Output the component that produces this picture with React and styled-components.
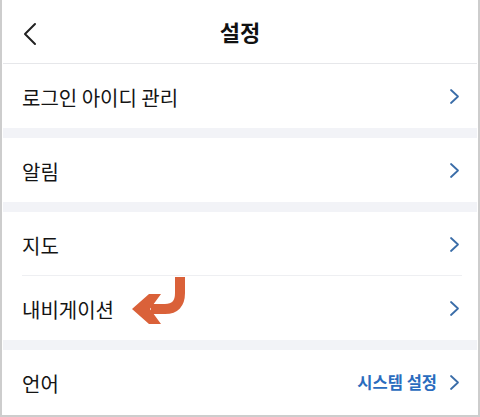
import React from "react";
import styled, { createGlobalStyle } from "styled-components";

const GlobalStyle = createGlobalStyle`
  body {
    margin: 0;
    background: #fff;
    font-family: "Noto Sans CJK KR", "Noto Sans", sans-serif;
  }
`;

const Screen = styled.div`
  width: 480px;
  height: 417px;
  box-sizing: border-box;
  border-left: 2px solid #cdcdcd;
  border-right: 2px solid #cdcdcd;
  border-bottom: 2px solid #cdcdcd;
  padding: 0 1px;
  background: #fff;
  overflow: hidden;
`;

const Header = styled.header`
  position: relative;
  height: 63px;
  display: flex;
  align-items: center;
  justify-content: center;
  border-bottom: 1px solid #e6e7ea;
`;

const BackButton = styled.button`
  position: absolute;
  left: 17px;
  top: 22px;
  padding: 0;
  border: none;
  background: none;
  display: flex;
`;

const Title = styled.h1`
  margin: 0;
  margin-top: -2px;
  font-size: 22px;
  font-weight: 700;
  color: #111;
`;

const Group = styled.section`
  background: #fff;
`;

const Gap = styled.div`
  height: 10px;
  background: #f2f3f7;
`;

const Row = styled.div`
  position: relative;
  height: 64px;
  display: flex;
  align-items: center;
  justify-content: space-between;
  padding: 0 17px 0 19px;
  & + &::before {
    content: "";
    position: absolute;
    left: 19px;
    right: 15px;
    top: -1px;
    height: 1px;
    background: #eeeff2;
  }
`;

const Label = styled.span`
  font-size: 20px;
  color: #141414;
  margin-top: ${(p) => p.$shift || 0}px;
`;

const Trail = styled.div`
  display: flex;
  align-items: center;
  gap: 12px;
`;

const Value = styled.span`
  font-size: 16.5px;
  font-weight: 700;
  color: #2a6cbe;
`;

const Annotation = styled.svg`
  position: absolute;
  left: 126px;
  top: 1px;
`;

function Chevron() {
  return (
    <svg width="11" height="17" viewBox="0 0 11 17">
      <polyline
        points="2,2 9,8.5 2,15"
        fill="none"
        stroke="#3a6da8"
        strokeWidth="1.8"
        strokeLinecap="round"
        strokeLinejoin="round"
      />
    </svg>
  );
}

function BackIcon() {
  return (
    <svg width="18" height="24" viewBox="0 0 18 24">
      <polyline
        points="15,2 5,12 15,22"
        fill="none"
        stroke="#222"
        strokeWidth="2"
        strokeLinecap="round"
        strokeLinejoin="round"
      />
    </svg>
  );
}

function CurvedArrow() {
  return (
    <Annotation width="60" height="52" viewBox="0 0 60 52">
      <path
        d="M51 0 V16 Q51 32 36 32 H22"
        fill="none"
        stroke="#da6139"
        strokeWidth="10"
      />
      <polygon points="3,32 20,17 32,17 21,32 32,47 20,47" fill="#da6139" />
    </Annotation>
  );
}

export default function App() {
  return (
    <>
      <GlobalStyle />
      <Screen>
        <Header>
          <BackButton>
            <BackIcon />
          </BackButton>
          <Title>설정</Title>
        </Header>
        <Group>
          <Row>
            <Label $shift={2}>로그인 아이디 관리</Label>
            <Chevron />
          </Row>
        </Group>
        <Gap />
        <Group>
          <Row>
            <Label $shift={2}>알림</Label>
            <Chevron />
          </Row>
        </Group>
        <Gap />
        <Group>
          <Row>
            <Label $shift={2}>지도</Label>
            <Chevron />
          </Row>
          <Row>
            <Label $shift={2}>내비게이션</Label>
            <CurvedArrow />
            <Chevron />
          </Row>
        </Group>
        <Gap />
        <Group>
          <Row>
            <Label $shift={2}>언어</Label>
            <Trail>
              <Value>시스템 설정</Value>
              <Chevron />
            </Trail>
          </Row>
        </Group>
      </Screen>
    </>
  );
}
